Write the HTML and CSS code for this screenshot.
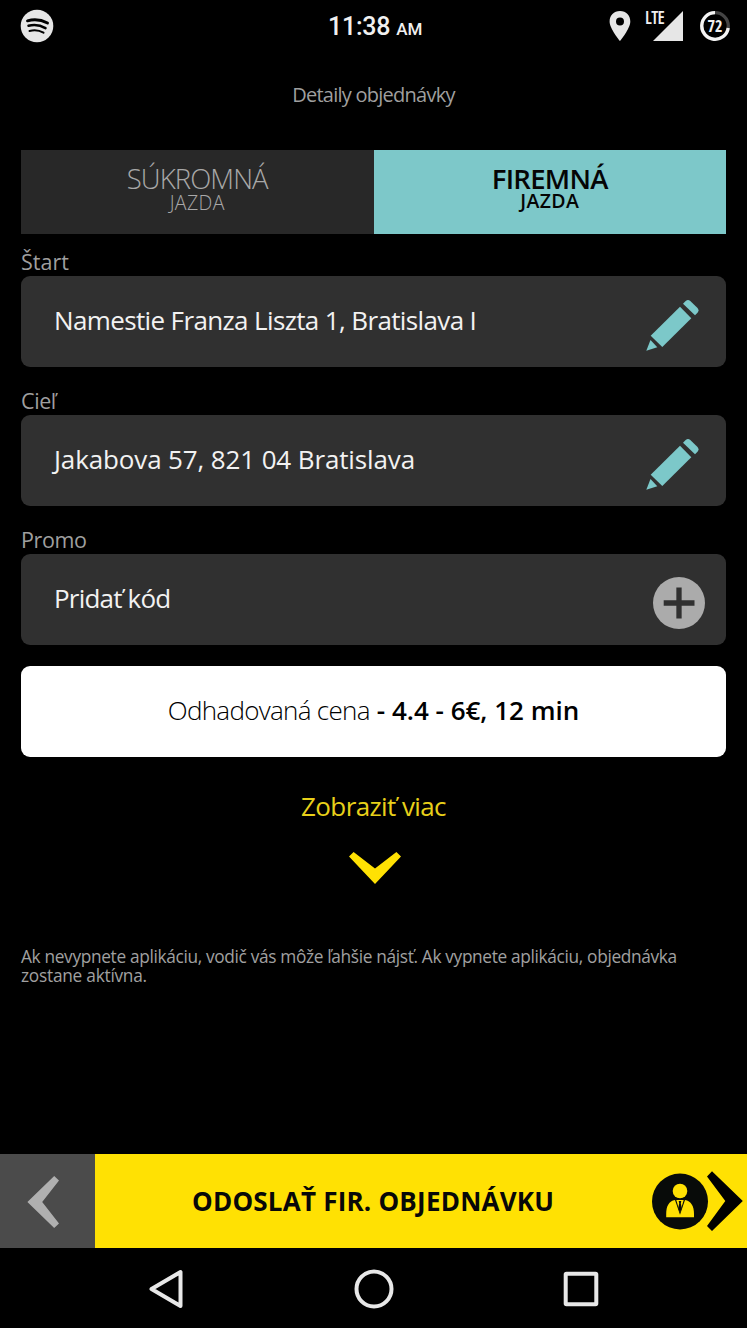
FILE: index.html
```html
<!DOCTYPE html>
<html lang="sk">
<head>
<meta charset="utf-8">
<title>Detaily objednávky</title>
<link rel="stylesheet" href="styles.css">
</head>
<body>
<header class="status">
  <svg class="spotify" viewBox="0 0 34 34"><circle cx="17" cy="17" r="16.3" fill="#e6e6e6"/><g fill="none" stroke="#000" stroke-linecap="round"><path d="M7.500 11.800Q18 9 27.500 14" stroke-width="2.900"/><path d="M8.500 16.800Q17.500 14.500 25.500 19.200" stroke-width="2.500"/><path d="M9.500 22Q17 20 23.500 23.700" stroke-width="2"/></g></svg>
  <div class="clock">11:38 <span class="ampm">AM</span></div>
  <div class="indicators">
    <svg class="pin" viewBox="0 0 22 30"><path fill="#e6e6e6" fill-rule="evenodd" d="M11 0C4.800 0 .6 4.600.6 10.400C.6 17.500 11 30 11 30S21.300 17.500 21.300 10.400C21.300 4.600 17.200 0 11 0ZM11 6.600a4 4 0 1 1 0 8a4 4 0 1 1 0-8Z"/></svg>
    <div class="signal"><span class="lte">LTE</span><svg class="bars" viewBox="0 0 30 30"><path d="M30 0V30H0Z" fill="#e6e6e6"/></svg></div>
    <div class="battery"><svg class="ring" viewBox="0 0 30 30"><circle cx="15" cy="15" r="13.300" fill="none" stroke="#444" stroke-width="3.300"/><path d="M15 1.700A13.300 13.300 0 1 0 28.200 17" fill="none" stroke="#f4f4f4" stroke-width="3.300"/></svg><span class="level">72</span></div>
  </div>
</header>
<main class="content">
  <h1 class="title">Detaily objednávky</h1>
  <div class="tabs">
    <div class="tab"><span class="tab-name">SÚKROMNÁ</span><span class="tab-sub">JAZDA</span></div>
    <div class="tab active"><span class="tab-name">FIREMNÁ</span><span class="tab-sub">JAZDA</span></div>
  </div>
  <div class="label l-start">Štart</div>
  <div class="field"><span class="value v-start">Namestie Franza Liszta 1, Bratislava I</span>
    <svg class="pencil" viewBox="0 0 54 52"><g fill="#7cc8c9"><path d="M34 6.700 45.300 18.300 16.300 47 4.700 35.700Z"/><path d="M37 3.700 39.700 1Q42 -.8 44.300 1L51.500 8Q53.500 10.300 51.500 12.700L49 15.300Z"/><path d="M4.500 40 11.300 47.300.3 50.700Z"/></g></svg></div>
  <div class="label">Cieľ</div>
  <div class="field"><span class="value v-dest">Jakabova 57, 821 04 Bratislava</span>
    <svg class="pencil" viewBox="0 0 54 52"><g fill="#7cc8c9"><path d="M34 6.700 45.300 18.300 16.300 47 4.700 35.700Z"/><path d="M37 3.700 39.700 1Q42 -.8 44.300 1L51.500 8Q53.500 10.300 51.500 12.700L49 15.300Z"/><path d="M4.500 40 11.300 47.300.3 50.700Z"/></g></svg></div>
  <div class="label">Promo</div>
  <div class="field"><span class="value v-promo">Pridať kód</span>
    <svg class="plus" viewBox="0 0 52 52"><circle cx="26" cy="26" r="26" fill="#ababab"/><path d="M10.700 26H41.500M26 10.600V41.400" stroke="#303030" stroke-width="5.300"/></svg></div>
  <div class="price"><span class="price-label">Odhadovaná cena</span><span class="price-value">- 4.4 - 6€, 12 min</span></div>
  <div class="more"><span class="more-text">Zobraziť viac</span>
    <svg class="down" viewBox="0 0 52 32"><path d="M0 4.600 4.600 0 26 16.500 47.400 0 52 4.600 26 32Z" fill="#ffe103"/></svg></div>
  <p class="note"><span class="n1">Ak nevypnete aplikáciu, vodič vás môže ľahšie nájsť. Ak vypnete aplikáciu, objednávka</span><br><span class="n2">zostane aktívna.</span></p>
</main>
<div class="actions">
  <div class="back"><svg class="left" viewBox="0 0 32 52"><path d="M27.200 0 32 4.500 15.200 26 32 47.500 27.200 52 .4 26Z" fill="#b0b0b0"/></svg></div>
  <div class="send"><span class="send-text">ODOSLAŤ FIR. OBJEDNÁVKU</span>
    <svg class="person" viewBox="0 0 92 60"><circle cx="28" cy="30.500" r="28" fill="#080b09"/><circle cx="28" cy="20" r="7.300" fill="#ffe103"/><path d="M14.200 46.300V43C14.200 35 17 30 23 29L28 43.800 33 29C39 30 42 35 42 43V46.300Z" fill="#ffe103"/><path d="M24.300 29H31.700L28 41.500Z" fill="#ffe103"/><path d="M26.700 30H29.300L28.800 32.300 29.800 37 28 42 26.200 37 27.200 32.300Z" fill="#080b09"/><path d="M55 5.500 60 .3 90.800 30 60 60 55 55 73.300 30Z" fill="#000"/></svg></div>
</div>
<nav class="navbar">
  <svg class="nav-back" viewBox="0 0 36 40"><path d="M32.500 3V37L3.500 20Z" fill="none" stroke="#e8e8e8" stroke-width="4" stroke-linejoin="round"/></svg>
  <svg class="nav-home" viewBox="0 0 40 40"><circle cx="20" cy="20" r="17.500" fill="none" stroke="#e8e8e8" stroke-width="4"/></svg>
  <svg class="nav-recent" viewBox="0 0 36 36"><rect x="2.700" y="2.700" width="30.600" height="30.600" rx=".8" fill="none" stroke="#e8e8e8" stroke-width="4"/></svg>
</nav>
</body>
</html>
```
FILE: styles.css
```css
* { box-sizing: border-box; }
body { margin: 0; width: 747px; height: 1328px; background: #000; overflow: hidden; display: flex; flex-direction: column; font-family: "Open Sans", "Noto Sans", sans-serif; font-weight: 400; white-space: nowrap; }
svg { display: block; flex: none; }
.status { height: 50px; display: grid; grid-template-columns: 1fr auto 1fr; align-items: center; padding: 0 17px 0 20px; color: #f0f0f0; font-family: Roboto, sans-serif; }
.spotify { width: 34px; height: 34px; }
.clock { font-size: 25px; font-weight: 500; line-height: 46px; padding-top: 4px; letter-spacing: -.2px; }
.ampm { font-size: 17px; }
.indicators { display: flex; justify-content: flex-end; align-items: center; }
.pin { width: 22px; height: 30px; margin-right: 14px; }
.signal { display: flex; width: 38px; height: 30px; margin-right: 17px; }
.lte { width: 8px; height: 15px; font-size: 17.5px; line-height: 13px; font-family: "Open Sans", sans-serif; font-weight: 600; font-stretch: 75%; letter-spacing: -.6px; }
.bars { width: 30px; height: 30px; }
.battery { display: grid; width: 30px; height: 30px; place-items: center; }
.ring, .level { grid-area: 1 / 1; }
.ring { width: 30px; height: 30px; }
.level { font-family: "Open Sans", sans-serif; font-size: 16px; line-height: 16px; font-weight: 700; font-stretch: 75%; padding-bottom: 1px; }
.content { height: 1104px; padding: 0 21px; color: #9f9f9f; }
.title { margin: 0; height: 100px; padding-top: 31px; text-align: center; font-size: 20px; font-weight: 400; line-height: 28px; letter-spacing: -.75px; }
.tabs { display: grid; grid-template-columns: 1fr 1fr; height: 84px; }
.tab { display: flex; flex-direction: column; align-items: center; padding-top: 15px; background: #282828; color: #a8a8a8; font-weight: 300; }
.tab-name { font-size: 27.5px; line-height: 28px; letter-spacing: -.9px; }
.tab-sub { font-size: 19.5px; line-height: 20px; letter-spacing: .4px; }
.active { background: #7dc8c9; color: #050505; font-weight: 600; }
.active .tab-name { letter-spacing: -.7px; }
.active .tab-sub { line-height: 16px; }
.label { height: 48px; padding-top: 20px; font-size: 21.5px; line-height: 28px; letter-spacing: -.4px; }
.l-start { height: 42px; padding-top: 14px; letter-spacing: 0; }
.field { height: 91px; display: flex; align-items: center; justify-content: space-between; border-radius: 9px; background: #303030; padding: 5px 26px 0 33px; }
.value { color: #f2f2f2; font-size: 26px; line-height: 36px; padding-bottom: 8px; }
.v-start { letter-spacing: -.63px; }
.v-dest { letter-spacing: -.13px; }
.v-promo { letter-spacing: -.8px; }
.pencil { width: 54px; height: 52px; margin-top: 4px; }
.plus { width: 52px; height: 52px; margin: 1px -5px 0 0; }
.price { display: flex; justify-content: center; gap: 7px; height: 91px; margin-top: 21px; background: #fff; border-radius: 9px; color: #000; font-size: 26px; line-height: 89px; }
.price-label { font-weight: 300; letter-spacing: -.7px; }
.price-value { font-weight: 600; }
.more { display: flex; flex-direction: column; align-items: center; padding-top: 31px; color: #e8d01a; font-size: 26px; line-height: 36px; }
.more-text { letter-spacing: -.6px; }
.down { width: 52px; height: 32px; margin: 28px 0 0 2px; }
.note { margin: 64px 0 0; font-size: 17.3px; line-height: 18.5px; color: #a0a0a0; }
.n1 { letter-spacing: -.34px; }
.n2 { letter-spacing: -.25px; }
.actions { display: flex; height: 94px; }
.back { width: 95px; background: #4b4b4b; display: flex; align-items: center; padding: 2px 0 0 27px; }
.left { width: 32px; height: 52px; }
.send { flex: 1; background: #ffe103; color: #080808; display: flex; align-items: center; justify-content: space-between; padding: 0 3px 0 97px; font-weight: 700; font-size: 26px; }
.send-text { letter-spacing: .22px; padding-bottom: 1px; }
.person { width: 92px; height: 60px; }
.navbar { height: 80px; display: grid; grid-template-columns: 1fr auto 1fr; width: 451px; align-items: center; margin-left: 148px; padding-top: 1px; }
.nav-back { width: 36px; height: 40px; }
.nav-home { width: 40px; height: 40px; }
.nav-recent { width: 36px; height: 36px; justify-self: end; }
```
